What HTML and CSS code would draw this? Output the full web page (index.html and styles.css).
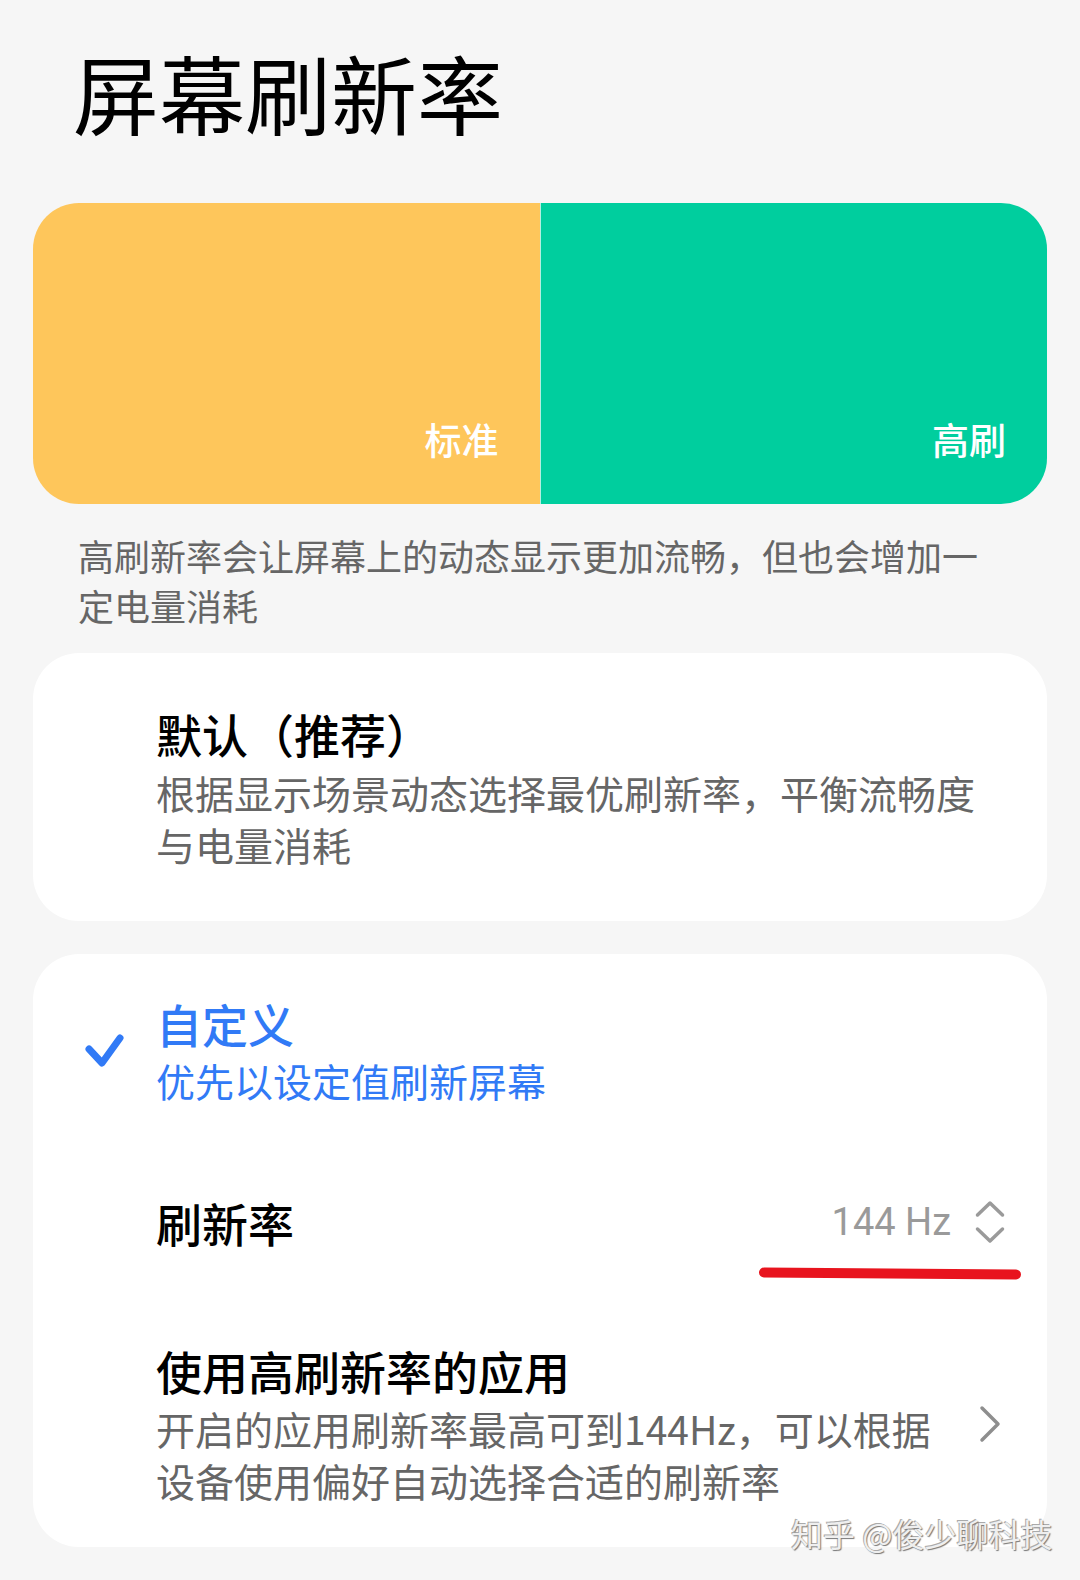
FILE: index.html
```html
<!DOCTYPE html>
<html>
<head>
<meta charset="utf-8">
<title>屏幕刷新率</title>
<link rel="stylesheet" href="styles.css">
</head>
<body>
<div class="page">
	<h1 class="title">屏幕刷新率</h1>

	<div class="banner">
		<div class="half half-std"><span>标准</span></div>
		<div class="half half-high"><span>高刷</span></div>
	</div>

	<p class="desc">高刷新率会让屏幕上的动态显示更加流畅，但也会增加一定电量消耗</p>

	<div class="card">
		<div class="row">
			<div class="mark"></div>
			<div class="text">
				<div class="name">默认（推荐）</div>
				<div class="sub">根据显示场景动态选择最优刷新率，平衡流畅度与电量消耗</div>
			</div>
		</div>
	</div>

	<div class="card card-custom">
		<div class="row row-custom">
			<div class="mark">
				<svg width="48" height="40" viewBox="0 0 48 40"><path d="M8 18 L21 32 L39 7" fill="none" stroke="#317af6" stroke-width="7" stroke-linecap="round" stroke-linejoin="round"/></svg>
			</div>
			<div class="text">
				<div class="name blue">自定义</div>
				<div class="sub blue">优先以设定值刷新屏幕</div>
			</div>
		</div>

		<div class="row row-rate">
			<div class="mark"></div>
			<div class="name">刷新率</div>
			<div class="value">
				<span>144 Hz</span>
				<svg width="32" height="44" viewBox="0 0 32 44"><path d="M2.5 15 L15 3 L27.5 15 M2.5 29 L15 41 L27.5 29" fill="none" stroke="#9a9a9a" stroke-width="3.5" stroke-linecap="round" stroke-linejoin="round"/></svg>
			</div>
		</div>

		<div class="row row-apps">
			<div class="mark"></div>
			<div class="text">
				<div class="name">使用高刷新率的应用</div>
				<div class="sub">开启的应用刷新率最高可到144Hz，可以根据设备使用偏好自动选择合适的刷新率</div>
			</div>
			<svg class="arrow" width="32" height="44" viewBox="0 0 32 44"><path d="M7 6 L23 22 L7 38" fill="none" stroke="#8e8e8e" stroke-width="3.5" stroke-linecap="round" stroke-linejoin="round"/></svg>
		</div>

		<!-- 红色标注线 -->
		<svg class="underline" width="264" height="14" viewBox="0 0 264 14"><path d="M6 5.5 Q130 6 258 7.5" fill="none" stroke="#e8141e" stroke-width="10" stroke-linecap="round"/></svg>
	</div>

	<div class="watermark">知乎 @俊少聊科技</div>
</div>
</body>
</html>
```

FILE: styles.css
```css
*{
	margin: 0;
	padding: 0;
	box-sizing: border-box;
}
body{
	background-color: #f6f6f6;
	font-family: "Noto Sans CJK SC", "Noto Sans", sans-serif;
	color: #000;
}
.page{
	position: relative;
	width: 1080px;
	height: 1580px;
	padding: 42px 33px 0;
}
.title{
	padding-left: 40px;
	font-size: 86px;
	line-height: 100px;
	font-weight: 400;
}

/* 顶部色块 */
.banner{
	display: flex;
	height: 301px;
	margin-top: 61px;
	border-radius: 46px;
	overflow: hidden;
}
.half{
	flex: 1;
	display: flex;
	justify-content: flex-end;
	align-items: flex-end;
	padding: 0 41px 45px 0;
	color: #fff;
	font-size: 37px;
	line-height: 40px;
	font-weight: 500;
}
.half-std{
	background-color: #fec65b;
}
.half-high{
	background-color: #00ce9e;
	border-left: 1px solid rgba(255,255,255,0.7);
}

.desc{
	margin-top: 26px;
	padding: 0 60px 0 45px;
	font-size: 36px;
	line-height: 50px;
	color: #666;
}

/* 卡片 */
.card{
	position: relative;
	margin-top: 23px;
	padding: 52px 40px 51px 48px;
	background-color: #fff;
	border-radius: 46px;
}
.card-custom{
	margin-top: 33px;
	padding-top: 41px;
	padding-bottom: 41px;
}
.row{
	display: grid;
	grid-template-columns: 75px 1fr auto;
	align-items: center;
}
.mark svg{
	display: block;
}
.name{
	font-size: 46px;
	line-height: 56px;
	font-weight: 500;
}
.sub{
	margin-top: 5px;
	font-size: 39px;
	line-height: 52px;
	color: #666;
}
.blue{
	color: #317af6;
}
.row-custom .sub{
	margin-top: 3px;
}
.row-rate{
	margin-top: 88px;
}
.row-apps{
	margin-top: 92px;
}
.row-apps .sub{
	margin-top: 4px;
}
.value{
	display: flex;
	align-items: center;
	font-family: Roboto, "Noto Sans", sans-serif;
	font-size: 38px;
	color: #9a9a9a;
}
.value svg{
	display: block;
	margin-left: 24px;
}
.arrow{
	display: block;
	margin-left: 20px;
}
.underline{
	position: absolute;
	left: 725px;
	top: 313px;
}

.watermark{
	position: absolute;
	left: 791px;
	top: 1517px;
	font-size: 32px;
	line-height: 32px;
	color: #efefef;
	text-shadow: 1px 1px 1px #777, -1px -1px 0 #aaa;
}
```
